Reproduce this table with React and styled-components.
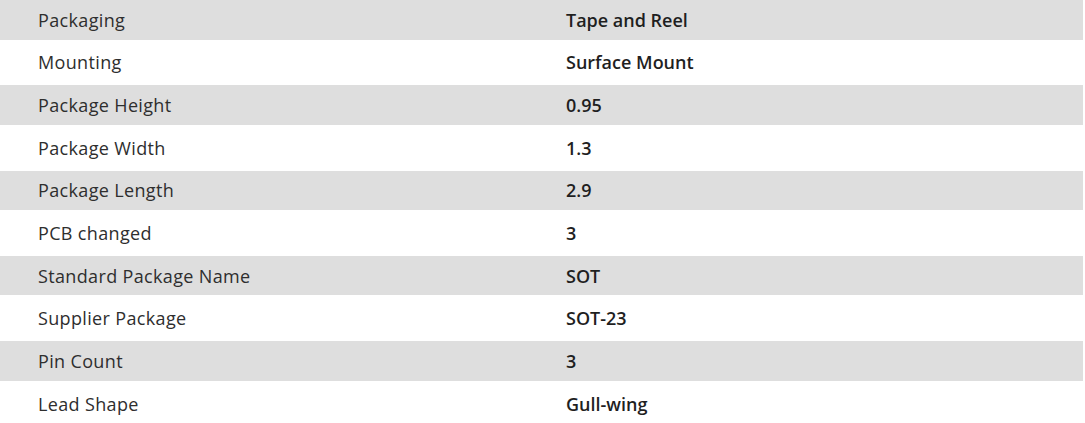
import React from 'react';
import styled, { createGlobalStyle } from 'styled-components';

const GlobalStyle = createGlobalStyle`
  body {
    margin: 0;
    background: #fff;
    font-family: "Open Sans", "Noto Sans", sans-serif;
  }
`;

const Table = styled.div`
  width: 1083px;
`;

const Row = styled.div`
  display: grid;
  grid-template-columns: 528px 1fr;
  align-items: center;
  padding-left: 38px;
  height: ${props => (props.shaded ? '39.5px' : '45.8px')};
  background: ${props => (props.shaded ? '#dedede' : '#fff')};
`;

const Label = styled.div`
  font-size: 18px;
  letter-spacing: 0.35px;
  color: #2e2e2e;
`;

const Value = styled.div`
  font-size: 18px;
  font-weight: 600;
  color: #1f1f1f;
`;

const specs = [
  ['Packaging', 'Tape and Reel'],
  ['Mounting', 'Surface Mount'],
  ['Package Height', '0.95'],
  ['Package Width', '1.3'],
  ['Package Length', '2.9'],
  ['PCB changed', '3'],
  ['Standard Package Name', 'SOT'],
  ['Supplier Package', 'SOT-23'],
  ['Pin Count', '3'],
  ['Lead Shape', 'Gull-wing'],
];

export default function App() {
  return (
    <>
      <GlobalStyle />
      <Table>
        {specs.map(([label, value], i) => (
          <Row key={label} shaded={i % 2 === 0}>
            <Label>{label}</Label>
            <Value>{value}</Value>
          </Row>
        ))}
      </Table>
    </>
  );
}
